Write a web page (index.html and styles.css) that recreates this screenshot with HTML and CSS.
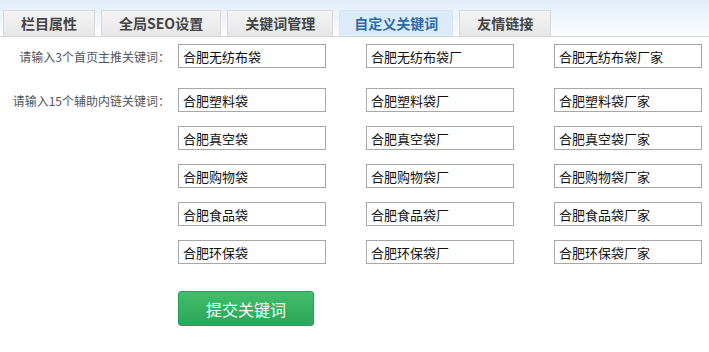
FILE: index.html
```html
<!DOCTYPE html>
<html lang="zh-CN">
<head>
  <meta charset="UTF-8" />
  <title>自定义关键词</title>
  <link rel="stylesheet" href="styles.css">
</head>
<body>
  <div class="tab-bar">
    <span class="tab">栏目属性</span>
    <span class="tab">全局SEO设置</span>
    <span class="tab">关键词管理</span>
    <span class="tab active">自定义关键词</span>
    <span class="tab">友情链接</span>
  </div>

  <form class="keyword-form">
    <div class="row first">
      <label class="row-label">请输入3个首页主推关键词：</label>
      <div class="fields">
        <input type="text" value="合肥无纺布袋" />
        <input type="text" value="合肥无纺布袋厂" />
        <input type="text" value="合肥无纺布袋厂家" />
      </div>
    </div>
    <div class="row">
      <label class="row-label">请输入15个辅助内链关键词：</label>
      <div class="fields">
        <input type="text" value="合肥塑料袋" />
        <input type="text" value="合肥塑料袋厂" />
        <input type="text" value="合肥塑料袋厂家" />
      </div>
    </div>
    <div class="row">
      <label class="row-label"></label>
      <div class="fields">
        <input type="text" value="合肥真空袋" />
        <input type="text" value="合肥真空袋厂" />
        <input type="text" value="合肥真空袋厂家" />
      </div>
    </div>
    <div class="row">
      <label class="row-label"></label>
      <div class="fields">
        <input type="text" value="合肥购物袋" />
        <input type="text" value="合肥购物袋厂" />
        <input type="text" value="合肥购物袋厂家" />
      </div>
    </div>
    <div class="row">
      <label class="row-label"></label>
      <div class="fields">
        <input type="text" value="合肥食品袋" />
        <input type="text" value="合肥食品袋厂" />
        <input type="text" value="合肥食品袋厂家" />
      </div>
    </div>
    <div class="row">
      <label class="row-label"></label>
      <div class="fields">
        <input type="text" value="合肥环保袋" />
        <input type="text" value="合肥环保袋厂" />
        <input type="text" value="合肥环保袋厂家" />
      </div>
    </div>
    <div class="actions">
      <button type="button" class="submit-btn">提交关键词</button>
    </div>
  </form>
</body>
</html>
```

FILE: styles.css
```css
body {
  margin: 0;
  font-family: "Noto Sans CJK SC", "Liberation Sans", sans-serif;
  background: #ffffff;
  color: #333;
}

.tab-bar {
  display: flex;
  align-items: flex-end;
  gap: 6px;
  height: 36px;
  padding-left: 3px;
  background: linear-gradient(to bottom, #e1edf9, #fbfdff);
  border-bottom: 1px solid #d4d4d4;
}

.tab {
  height: 25px;
  line-height: 25px;
  padding: 0 17px;
  font-size: 14px;
  font-weight: bold;
  color: #444;
  background: linear-gradient(to bottom, #f3f3f3, #e7e7e7);
  border: 1px solid #d9d9d9;
  border-bottom: none;
}

.tab.active {
  color: #2f6aa8;
  background: #dcebfa;
  border-color: #d6e4f2;
  padding: 0 14px;
}

.keyword-form {
  padding-top: 7px;
}

.row {
  display: flex;
  align-items: center;
  gap: 8px;
  height: 24px;
  margin-top: 14px;
}

.row.first {
  margin-top: 0;
  margin-bottom: 20px;
}

.row-label {
  flex: none;
  width: 170px;
  text-align: right;
  font-size: 12px;
  color: #555;
  white-space: nowrap;
}

.fields {
  display: flex;
  gap: 40px;
}

.fields input {
  flex: none;
  box-sizing: border-box;
  width: 148px;
  height: 24px;
  margin: 0;
  padding: 0 4px;
  border: 1px solid #a8a8a8;
  font-family: inherit;
  font-size: 13px;
  color: #111;
  outline: none;
}

.actions {
  padding: 27px 0 0 178px;
}

.submit-btn {
  width: 136px;
  height: 35px;
  border: 1px solid #2d9c55;
  border-radius: 3px;
  background: linear-gradient(to bottom, #41bd6b, #2ca65a);
  color: #f4fff6;
  font-family: inherit;
  font-size: 16px;
  cursor: pointer;
  box-shadow: 0 1px 2px rgba(0, 0, 0, 0.15);
}
```
